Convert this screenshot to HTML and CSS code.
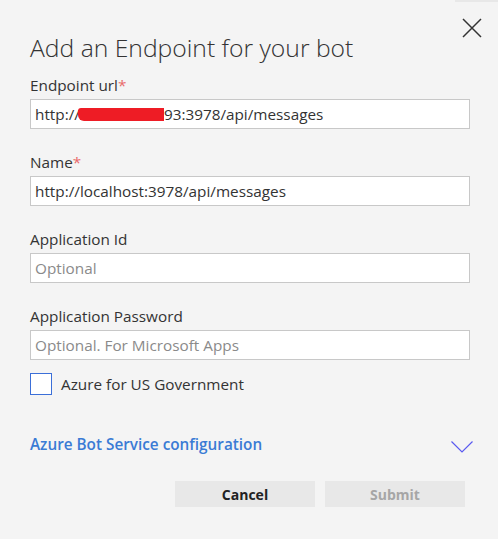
FILE: index.html
```html
<!DOCTYPE html>
<html>
<head>
<meta charset="utf-8">
<link rel="stylesheet" href="styles.css">
</head>
<body>
<div class="topstrip"></div>
<div class="dialog">
  <button class="close" aria-label="Close">
    <svg width="20" height="20" viewBox="0 0 20 20"><path d="M1 1 L19 19 M19 1 L1 19" stroke="#333" stroke-width="1.5" fill="none"/></svg>
  </button>
  <h1 class="title">Add an Endpoint for your bot</h1>
  <div class="field first">
    <label class="label">Endpoint url<span class="req">*</span></label>
    <div class="input"><span class="value">http://<span class="redact"></span>93:3978/api/messages</span></div>
  </div>
  <div class="field">
    <label class="label">Name<span class="req">*</span></label>
    <div class="input"><span class="value">http://localhost:3978/api/messages</span></div>
  </div>
  <div class="field">
    <label class="label">Application Id</label>
    <div class="input"><span class="placeholder">Optional</span></div>
  </div>
  <div class="field">
    <label class="label">Application Password</label>
    <div class="input"><span class="placeholder">Optional. For Microsoft Apps</span></div>
  </div>
  <div class="check">
    <span class="box"></span>
    <span class="check-label">Azure for US Government</span>
  </div>
  <div class="accordion">
    <span class="acc-title">Azure Bot Service configuration</span>
    <svg class="chev" width="22" height="12" viewBox="0 0 22 12"><path d="M0.5 0.5 L11 11 L21.5 0.5" stroke="#5a5af0" stroke-width="1.2" fill="none"/></svg>
  </div>
  <div class="actions">
    <button class="btn cancel">Cancel</button>
    <button class="btn submit">Submit</button>
  </div>
</div>
</body>
</html>
```
FILE: styles.css
```css
html, body {
  margin: 0;
  padding: 0;
  background: #f4f4f4;
  width: 498px;
  height: 539px;
  overflow: hidden;
  font-family: "Open Sans", "Noto Sans", sans-serif;
  color: #333;
}
.topstrip {
  height: 2px;
  margin-left: 455px;
  background: #e8e8e8;
}
.dialog {
  position: relative;
  padding: 0 28px 0 30px;
}
.close {
  position: absolute;
  top: 16px;
  right: 16px;
  border: 0;
  background: none;
  padding: 0;
  width: 20px;
  height: 20px;
}
.title {
  margin: 0;
  padding-top: 30px;
  font-size: 24.7px;
  font-weight: 300;
  line-height: 32px;
  height: 32px;
  color: #333;
}
.field {
  display: flex;
  flex-direction: column;
  margin-top: 23px;
}
.field.first { margin-top: 11px; }
.label {
  font-size: 15.3px;
  line-height: 20px;
  height: 20px;
  margin-bottom: 4px;
  color: #333;
}
.req { color: #e96a6a; }
.input {
  box-sizing: border-box;
  height: 30px;
  border: 1px solid #c8c8c8;
  background: #fff;
  display: flex;
  align-items: center;
  padding: 0 4px;
  font-size: 15.3px;
}
.value { color: #333; display: flex; align-items: center; }
.redact {
  display: inline-block;
  width: 86px;
  height: 13px;
  background: #ee1c25;
  margin-left: -2px;
  border-radius: 3px 0 0 6px;
}
.placeholder { color: #8a8a8a; }
.check {
  display: flex;
  align-items: center;
  margin-top: 13px;
  height: 22px;
  gap: 9px;
}
.box {
  width: 20px;
  height: 20px;
  border: 1px solid #3b6fd8;
  background: #fff;
}
.check-label {
  font-size: 15.3px;
}
.accordion {
  display: flex;
  align-items: center;
  justify-content: space-between;
  height: 24px;
  margin-top: 37px;
}
.acc-title {
  color: #3a7bd5;
  font-size: 15.3px;
  font-weight: 600;
}
.chev { margin-right: -3px; margin-top: 6px; }
.actions {
  display: flex;
  justify-content: flex-end;
  gap: 10px;
  margin-top: 25px;
  padding-right: 5px;
}
.btn {
  width: 140px;
  height: 26px;
  border: 0;
  background: #e8e8e8;
  font-family: inherit;
  font-size: 14px;
  font-weight: 700;
  padding: 0;
}
.cancel { color: #222; }
.submit { color: #a6a6a6; }
```
